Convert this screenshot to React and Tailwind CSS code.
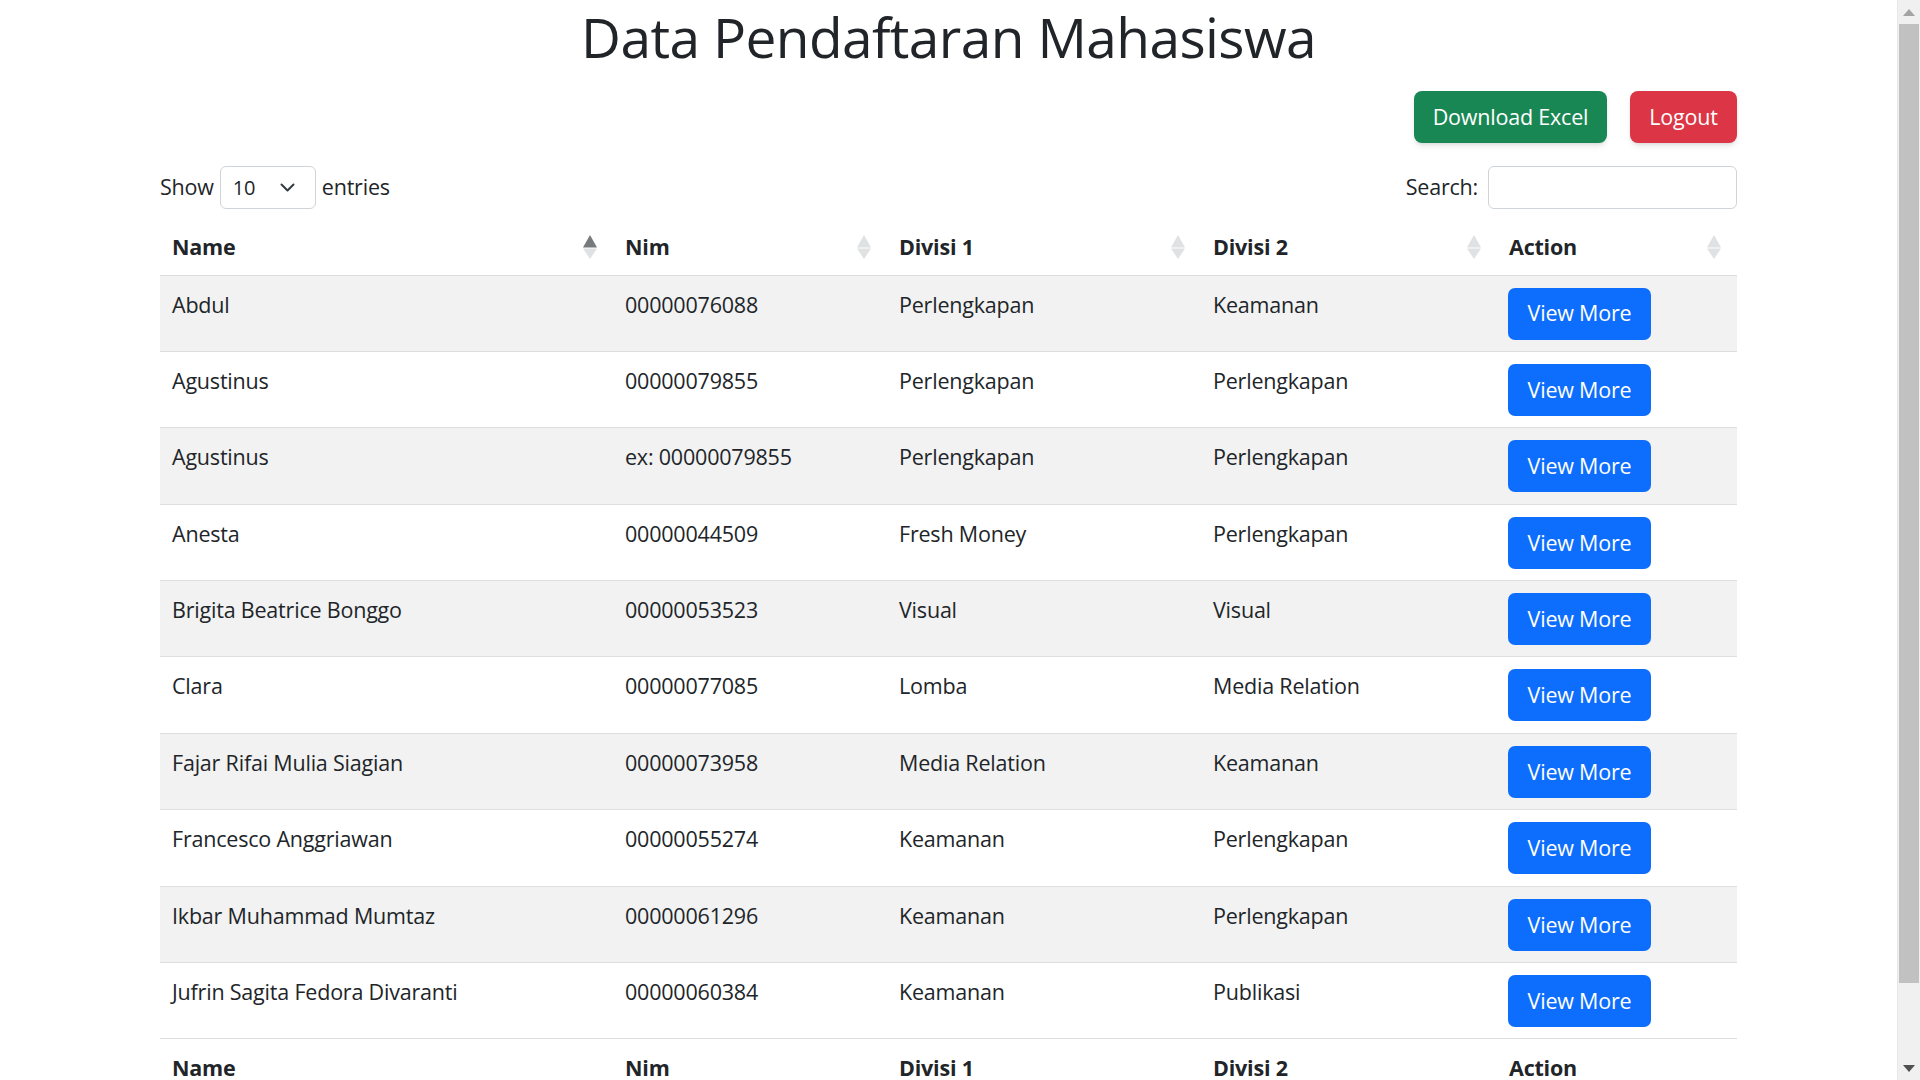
import React from "react";

const rows = [
  { name: "Abdul", nim: "00000076088", d1: "Perlengkapan", d2: "Keamanan" },
  { name: "Agustinus", nim: "00000079855", d1: "Perlengkapan", d2: "Perlengkapan" },
  { name: "Agustinus", nim: "ex: 00000079855", d1: "Perlengkapan", d2: "Perlengkapan" },
  { name: "Anesta", nim: "00000044509", d1: "Fresh Money", d2: "Perlengkapan" },
  { name: "Brigita Beatrice Bonggo", nim: "00000053523", d1: "Visual", d2: "Visual" },
  { name: "Clara", nim: "00000077085", d1: "Lomba", d2: "Media Relation" },
  { name: "Fajar Rifai Mulia Siagian", nim: "00000073958", d1: "Media Relation", d2: "Keamanan" },
  { name: "Francesco Anggriawan", nim: "00000055274", d1: "Keamanan", d2: "Perlengkapan" },
  { name: "Ikbar Muhammad Mumtaz", nim: "00000061296", d1: "Keamanan", d2: "Perlengkapan" },
  { name: "Jufrin Sagita Fedora Divaranti", nim: "00000060384", d1: "Keamanan", d2: "Publikasi" },
];

const columns = ["Name", "Nim", "Divisi 1", "Divisi 2", "Action"];

const SortIcon = ({ active }) => (
  <svg width="14" height="24" viewBox="0 0 14 24" className="shrink-0">
    <polygon points="0,12.5 7,0 14,12.5" fill={active ? "#777a7d" : "#dfe1e3"} />
    <polygon points="0,13.5 14,13.5 7,24" fill="#dfe1e3" />
  </svg>
);

const Scrollbar = () => (
  <div className="flex h-screen w-[23px] shrink-0 flex-col border-l border-[#e8e8e8] bg-[#f0f0f0]">
    <div className="flex h-[24px] items-center justify-center">
      <svg width="12" height="7" viewBox="0 0 12 7">
        <polygon points="0,7 6,0 12,7" fill="#a3a3a3" />
      </svg>
    </div>
    <div className="ml-[1px] mr-[1px] h-[959px] bg-[#c1c1c1]" />
    <div className="flex-1" />
    <div className="flex h-[24px] items-center justify-center">
      <svg width="12" height="7" viewBox="0 0 12 7">
        <polygon points="0,0 12,0 6,7" fill="#505050" />
      </svg>
    </div>
  </div>
);

const App = () => {
  return (
    <div className="flex h-screen overflow-hidden bg-white font-['Open_Sans','Noto_Sans',sans-serif] text-[21.5px] tracking-[-0.2px] text-[#212529]">
      <div className="flex-1 overflow-hidden">
        <div className="mx-auto w-[1577px]">
          <h1 className="pt-[3px] text-center text-[55px] leading-[67px] font-medium tracking-[-0.6px]">Data Pendaftaran Mahasiswa</h1>

          <div className="mt-[21px] flex justify-end gap-[23px]">
            <button className="h-[52px] w-[193px] rounded-[8px] bg-[#198754] text-white shadow-md">Download Excel</button>
            <button className="h-[52px] w-[107px] rounded-[8px] bg-[#dc3545] text-white shadow-md">Logout</button>
          </div>

          <div className="mt-[23px] flex h-[43px] items-center justify-between">
            <div className="flex items-center">
              <span>Show</span>
              <div className="mx-[6px] flex h-[43px] w-[96px] items-center justify-between rounded-[6px] border border-[#ced4da] pl-[12px] pr-[20px]">
                <span className="text-[20px]">10</span>
                <svg width="15" height="9" viewBox="0 0 15 9">
                  <path d="M1.5 1.5 L7.5 7.5 L13.5 1.5" fill="none" stroke="#343a40" strokeWidth="2" strokeLinecap="round" strokeLinejoin="round" />
                </svg>
              </div>
              <span>entries</span>
            </div>
            <div className="flex items-center gap-[10px]">
              <span>Search:</span>
              <input className="h-[43px] w-[249px] rounded-[6px] border border-[#ced4da] px-3 outline-none" />
            </div>
          </div>

          <table className="mt-[9px] w-full table-fixed border-collapse">
            <colgroup>
              <col className="w-[453px]" />
              <col className="w-[274px]" />
              <col className="w-[314px]" />
              <col className="w-[296px]" />
              <col className="w-[240px]" />
            </colgroup>
            <thead>
              <tr className="border-b border-[#dcdcdc]">
                {columns.map((c, i) => (
                  <th key={c} className="pt-[12px] pb-[11.5px] pl-[12px] pr-[16px] text-left font-bold leading-[33px]">
                    <div className="flex items-center justify-between">
                      <span>{c}</span>
                      <SortIcon active={i === 0} />
                    </div>
                  </th>
                ))}
              </tr>
            </thead>
            <tbody>
              {rows.map((r, i) => (
                <tr key={i} className={`border-b border-[#dedede] ${i % 2 === 0 ? "bg-[#f2f2f2]" : "bg-white"}`}>
                  <td className="pt-[12px] pb-[11.4px] pl-[12px] align-top leading-[33px]">{r.name}</td>
                  <td className="pt-[12px] pb-[11.4px] pl-[12px] align-top leading-[33px]">{r.nim}</td>
                  <td className="pt-[12px] pb-[11.4px] pl-[12px] align-top leading-[33px]">{r.d1}</td>
                  <td className="pt-[12px] pb-[11.4px] pl-[12px] align-top leading-[33px]">{r.d2}</td>
                  <td className="pt-[12px] pb-[11.4px] pl-[11px] align-top">
                    <button className="h-[52px] w-[143px] rounded-[7px] bg-[#0d6efd] text-white">View More</button>
                  </td>
                </tr>
              ))}
            </tbody>
            <tfoot>
              <tr>
                {columns.map((c) => (
                  <th key={c} className="pt-[12px] pb-[11px] pl-[12px] text-left font-bold leading-[33px]">{c}</th>
                ))}
              </tr>
            </tfoot>
          </table>
        </div>
      </div>
      <Scrollbar />
    </div>
  );
};

export default App;
